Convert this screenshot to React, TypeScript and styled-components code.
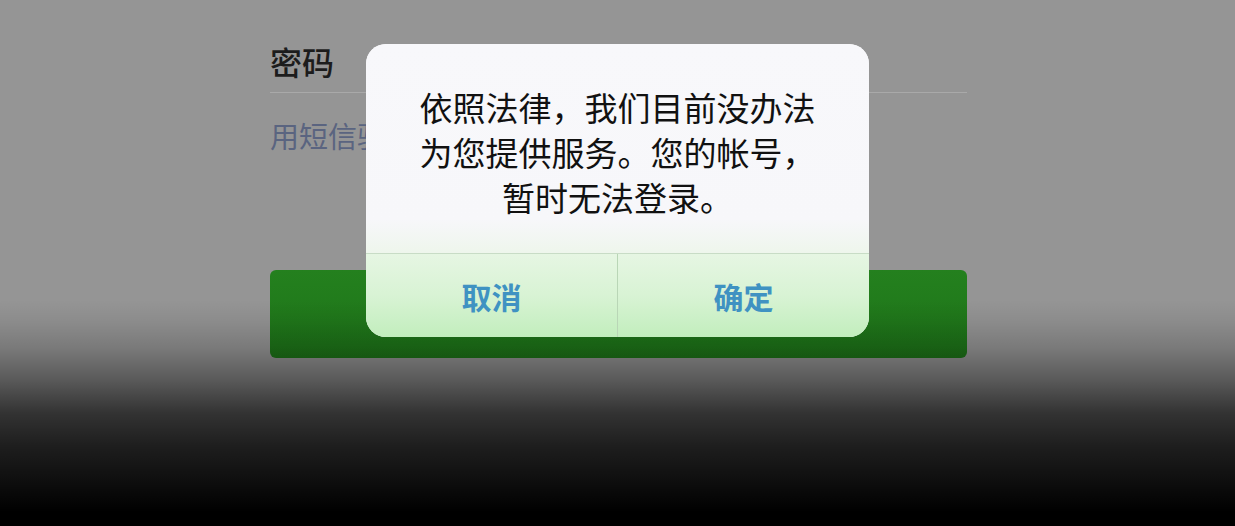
import React from "react";
import styled, { createGlobalStyle } from "styled-components";

const Global = createGlobalStyle`
  html, body { margin: 0; padding: 0; background: #000; }
  body { font-family: "Noto Sans CJK SC", "Noto Sans", sans-serif; }
`;

const Screen = styled.div`
  position: relative;
  width: 1235px;
  height: 526px;
  overflow: hidden;
  background: #959595;
`;

const Form = styled.div`
  width: 697px;
  margin-left: 270px;
  padding-top: 38px;
  display: flex;
  flex-direction: column;
`;

const Label = styled.div`
  font-size: 32px;
  line-height: 46px;
  color: #1c1c1c;
  font-weight: 500;
`;

const Divider = styled.div`
  height: 1px;
  margin-top: 8px;
  background: #a9a9a9;
`;

const SmsLink = styled.div`
  margin-top: 22px;
  width: 96px;
  overflow: hidden;
  white-space: nowrap;
  font-size: 29px;
  line-height: 40px;
  color: #5a6480;
`;

const GreenButton = styled.div`
  margin-top: 115px;
  height: 88px;
  border-radius: 6px;
  background: linear-gradient(#24801e, #1d7418);
`;

const Shade = styled.div`
  position: absolute;
  inset: 0;
  pointer-events: none;
  background: linear-gradient(
    to bottom,
    rgba(0, 0, 0, 0) 0px,
    rgba(0, 0, 0, 0) 300px,
    rgba(0, 0, 0, 0.06) 320px,
    rgba(0, 0, 0, 0.18) 347px,
    rgba(0, 0, 0, 0.4) 380px,
    rgba(0, 0, 0, 0.66) 413px,
    rgba(0, 0, 0, 0.8) 446px,
    rgba(0, 0, 0, 0.9) 480px,
    rgba(0, 0, 0, 1) 512px
  );
`;

const Dialog = styled.div`
  position: absolute;
  left: 366px;
  top: 44px;
  width: 503px;
  height: 293px;
  border-radius: 20px;
  overflow: hidden;
  display: flex;
  flex-direction: column;
  background: #f7f7fa;
  z-index: 1;
`;

const Message = styled.div`
  flex: 1;
  padding-top: 41px;
  text-align: center;
  font-size: 33px;
  line-height: 45px;
  color: #111;
  background: linear-gradient(#f8f8fb 0%, #f7f7fa 84%, #eef6ec 100%);
`;

const Line = styled.div`
  white-space: nowrap;
`;

const Actions = styled.div`
  height: 83px;
  display: grid;
  grid-template-columns: 252px 1fr;
  border-top: 1px solid #c8dcc6;
  background: linear-gradient(#e6f6e3 0%, #d8f3d4 50%, #c2eebd 100%);
`;

const ActionButton = styled.div<{ $divider?: boolean }>`
  display: flex;
  align-items: center;
  justify-content: center;
  font-size: 30px;
  font-weight: 700;
  color: #3f92c2;
  border-right: ${(p) => (p.$divider ? "1px solid #b9d6b6" : "none")};
`;

export default function App() {
  return (
    <>
      <Global />
      <Screen>
        <Form>
          <Label>密码</Label>
          <Divider />
          <SmsLink>用短信验证码登录</SmsLink>
          <GreenButton />
        </Form>
        <Dialog>
          <Message>
            <Line>依照法律，我们目前没办法</Line>
            <Line>为您提供服务。您的帐号，</Line>
            <Line>暂时无法登录。</Line>
          </Message>
          <Actions>
            <ActionButton $divider>取消</ActionButton>
            <ActionButton>确定</ActionButton>
          </Actions>
        </Dialog>
        <Shade />
      </Screen>
    </>
  );
}
